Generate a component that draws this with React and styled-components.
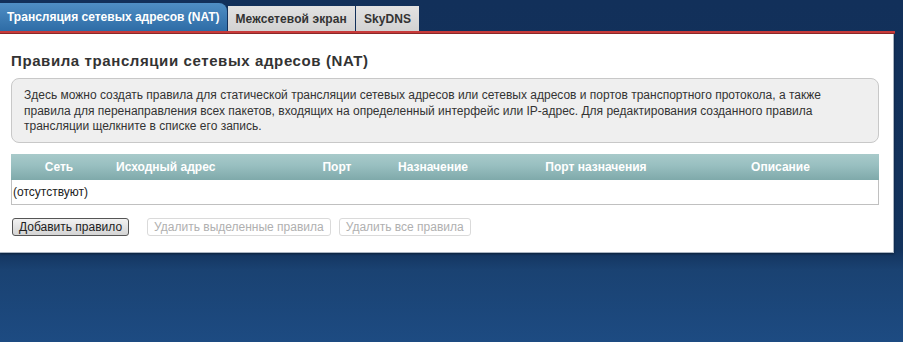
import React from "react";
import styled, { createGlobalStyle } from "styled-components";

const Global = createGlobalStyle`
  html, body { margin: 0; padding: 0; }
  body {
    width: 903px;
    height: 342px;
    overflow: hidden;
    background: linear-gradient(to bottom, #12305a 0px, #13335d 250px, #1a4272 270px, #1d4b82 342px);
    font-family: Arial, "Liberation Sans", sans-serif;
  }
`;

const Page = styled.div`
  display: flex;
  flex-direction: column;
  width: 903px;
`;

const TabBar = styled.div`
  display: flex;
  align-items: flex-end;
  height: 31px;
`;

const Tab = styled.div`
  box-sizing: border-box;
  height: ${(p) => (p.$active ? "28px" : "25px")};
  padding: 0 ${(p) => (p.$active ? "7px" : "8px")};
  margin-right: 1px;
  display: flex;
  align-items: center;
  font-size: 12px;
  font-weight: bold;
  letter-spacing: ${(p) => (p.$active ? "0" : "0.1px")};
  color: ${(p) => (p.$active ? "#ffffff" : "#333333")};
  background: ${(p) =>
    p.$active
      ? "linear-gradient(to bottom, #4f8ec4, #2e6ca6)"
      : "linear-gradient(to bottom, #e2e2e2, #d2d2d2)"};
  border-radius: ${(p) => (p.$active ? "0 8px 0 0" : "0")};
  white-space: nowrap;
`;

const RedLine = styled.div`
  width: 895px;
  height: 3px;
  background: #c83a3a;
  border-bottom: 1px solid #8e2a2a;
  box-sizing: border-box;
`;

const Panel = styled.div`
  width: 894px;
  box-sizing: border-box;
  background: #ffffff;
  border-right: 1px solid #a9b4c2;
  border-bottom: 1px solid #a9b4c2;
  box-shadow: 0 1px 2px rgba(0, 0, 0, 0.4);
  padding: 17px 14px 16px 11px;
  display: flex;
  flex-direction: column;
`;

const Title = styled.h1`
  margin: 0 0 8px 0;
  font-size: 15px;
  font-weight: bold;
  letter-spacing: 0.6px;
  color: #333333;
  line-height: 19px;
`;

const Info = styled.div`
  box-sizing: border-box;
  width: 868px;
  background: #efefef;
  border: 1px solid #c8c8c8;
  border-radius: 8px;
  padding: 9px 12px 7px 12px;
  font-size: 12px;
  line-height: 15.5px;
  color: #333333;
  margin-bottom: 11px;
`;

const Table = styled.div`
  width: 868px;
  box-sizing: border-box;
  border: 1px solid #c0c0c0;
  border-top: none;
  display: flex;
  flex-direction: column;
`;

const HeadRow = styled.div`
  display: grid;
  grid-template-columns: 96px 183px 94px 98px 228px 1fr;
  height: 26px;
  margin: 0 -1px;
  background: linear-gradient(to bottom, #a8caca 0%, #98bfc0 45%, #7fa9aa 100%);
  align-items: center;
`;

const HeadCell = styled.div`
  font-size: 12px;
  font-weight: bold;
  color: #ffffff;
  text-align: ${(p) => p.$align || "center"};
  padding-left: ${(p) => p.$pl || 0}px;
  padding-right: ${(p) => p.$pr || 0}px;
  white-space: nowrap;
`;

const BodyRow = styled.div`
  height: 24px;
  display: flex;
  align-items: center;
  padding-left: 1px;
  font-size: 12px;
  color: #222222;
`;

const Buttons = styled.div`
  display: flex;
  gap: 8px;
  margin-top: 13px;
  padding-left: 1px;
`;

const Button = styled.button`
  box-sizing: border-box;
  height: 18px;
  padding: 0 6px;
  margin-right: ${(p) => p.$mr || 0}px;
  font-family: Arial, "Liberation Sans", sans-serif;
  font-size: 12px;
  line-height: 14px;
  border-radius: 3px;
  color: ${(p) => (p.disabled ? "#b0b0b0" : "#222222")};
  border: 1px solid ${(p) => (p.disabled ? "#dadada" : "#555555")};
  background: ${(p) =>
    p.disabled ? "#ffffff" : "linear-gradient(to bottom, #f2f2f2, #d4d4d4)"};
`;

export default function App() {
  return (
    <Page>
      <Global />
      <TabBar>
        <Tab $active>Трансляция сетевых адресов (NAT)</Tab>
        <Tab>Межсетевой экран</Tab>
        <Tab>SkyDNS</Tab>
      </TabBar>
      <RedLine />
      <Panel>
        <Title>Правила трансляции сетевых адресов (NAT)</Title>
        <Info>
          Здесь можно создать правила для статической трансляции сетевых адресов или сетевых адресов и портов транспортного протокола, а также
          правила для перенаправления всех пакетов, входящих на определенный интерфейс или IP-адрес. Для редактирования созданного правила
          трансляции щелкните в списке его запись.
        </Info>
        <Table>
          <HeadRow>
            <HeadCell>Сеть</HeadCell>
            <HeadCell $align="left" $pl={9}>Исходный адрес</HeadCell>
            <HeadCell>Порт</HeadCell>
            <HeadCell>Назначение</HeadCell>
            <HeadCell>Порт назначения</HeadCell>
            <HeadCell $pr={28}>Описание</HeadCell>
          </HeadRow>
          <BodyRow>(отсутствуют)</BodyRow>
        </Table>
        <Buttons>
          <Button $mr={10}>Добавить правило</Button>
          <Button disabled>Удалить выделенные правила</Button>
          <Button disabled>Удалить все правила</Button>
        </Buttons>
      </Panel>
    </Page>
  );
}
